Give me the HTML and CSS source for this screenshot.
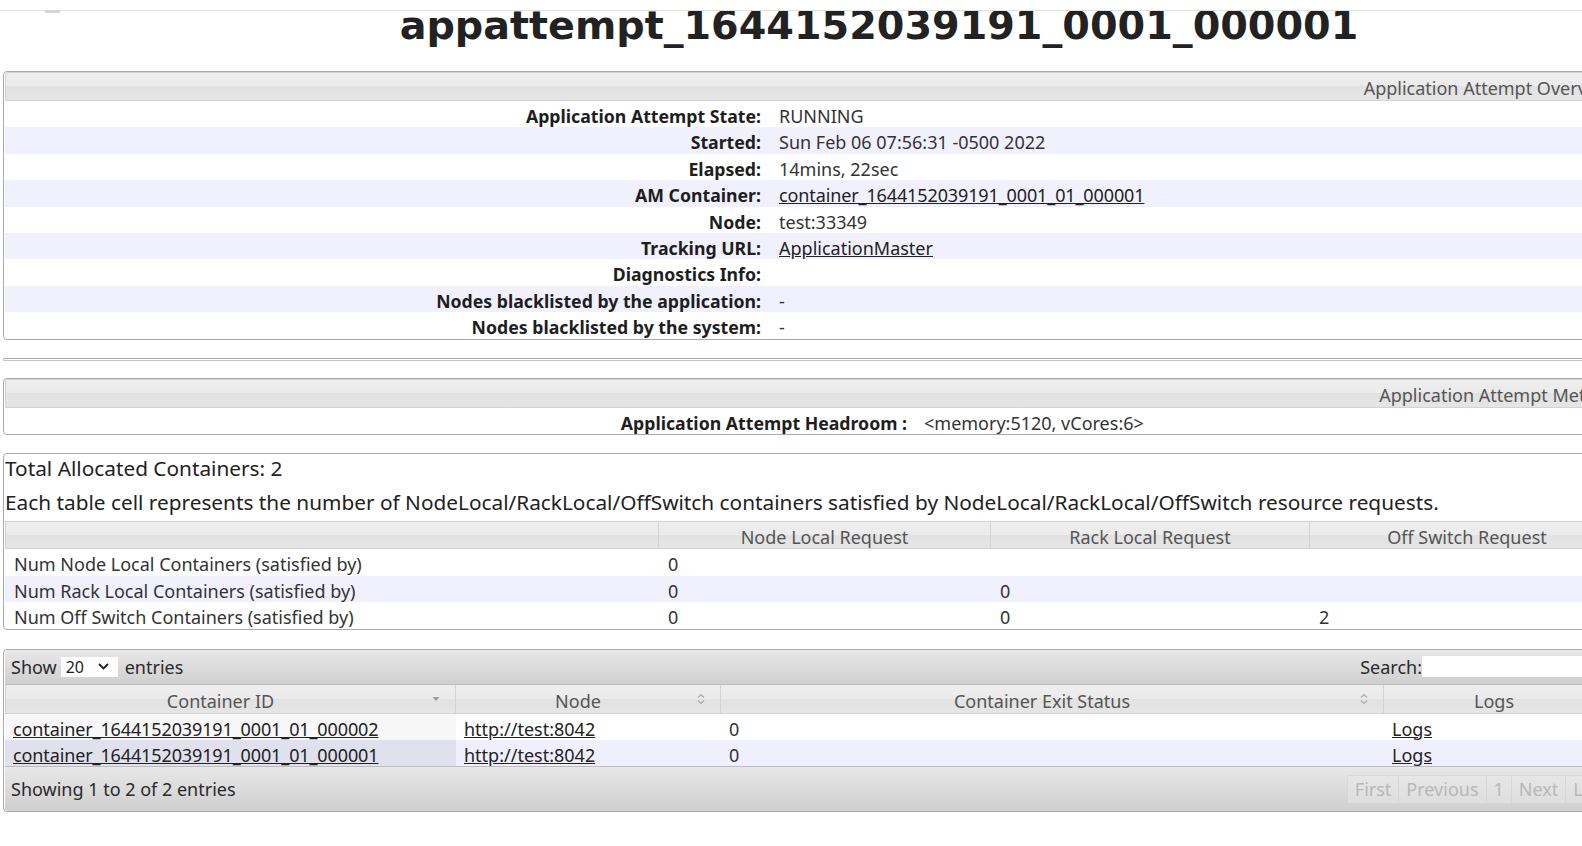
FILE: index.html
```html
<!DOCTYPE html>
<html lang="en">
<head>
<meta charset="utf-8">
<title>appattempt_1644152039191_0001_000001</title>
<link rel="stylesheet" href="styles.css">
</head>
<body>
<div class="topbar"><span class="topmark"></span></div>
<div class="content">
  <h1 class="title">appattempt_1644152039191_0001_000001</h1>

  <section class="box box-overview">
    <div class="box-head">Application Attempt Overview</div>
    <div class="info info-overview">
      <div class="info-row"><div class="lbl">Application Attempt State:</div><div class="val">RUNNING</div></div>
      <div class="info-row"><div class="lbl">Started:</div><div class="val">Sun Feb 06 07:56:31 -0500 2022</div></div>
      <div class="info-row"><div class="lbl">Elapsed:</div><div class="val">14mins, 22sec</div></div>
      <div class="info-row"><div class="lbl">AM Container:</div><div class="val"><a class="cid" href="#">container_1644152039191_0001_01_000001</a></div></div>
      <div class="info-row"><div class="lbl">Node:</div><div class="val">test:33349</div></div>
      <div class="info-row"><div class="lbl">Tracking URL:</div><div class="val"><a href="#">ApplicationMaster</a></div></div>
      <div class="info-row"><div class="lbl">Diagnostics Info:</div><div class="val"></div></div>
      <div class="info-row"><div class="lbl">Nodes blacklisted by the application:</div><div class="val">-</div></div>
      <div class="info-row"><div class="lbl">Nodes blacklisted by the system:</div><div class="val">-</div></div>
    </div>
  </section>

  <div class="box-empty"></div>

  <section class="box box-metrics">
    <div class="box-head">Application Attempt Metrics</div>
    <div class="info info-metrics">
      <div class="info-row"><div class="lbl">Application Attempt Headroom :</div><div class="val">&lt;memory:5120, vCores:6&gt;</div></div>
    </div>
  </section>

  <section class="box box-alloc">
    <p class="alloc-total">Total Allocated Containers: 2</p>
    <p class="alloc-desc">Each table cell represents the number of NodeLocal/RackLocal/OffSwitch containers satisfied by NodeLocal/RackLocal/OffSwitch resource requests.</p>
    <table class="grid alloc-table">
      <colgroup><col class="ac1"><col class="ac2"><col class="ac3"><col class="ac4"></colgroup>
      <thead>
        <tr><th class="first"></th><th>Node Local Request</th><th>Rack Local Request</th><th>Off Switch Request</th></tr>
      </thead>
      <tbody>
        <tr><td>Num Node Local Containers (satisfied by)</td><td>0</td><td></td><td></td></tr>
        <tr class="band"><td>Num Rack Local Containers (satisfied by)</td><td>0</td><td>0</td><td></td></tr>
        <tr><td>Num Off Switch Containers (satisfied by)</td><td>0</td><td>0</td><td>2</td></tr>
      </tbody>
    </table>
  </section>

  <section class="box box-containers">
    <div class="dt-bar dt-toolbar">
      <div class="dt-length">Show <span class="select"><span>20</span><svg class="chev" width="11" height="7" viewBox="0 0 11 7"><path d="M1 1 L5.5 5.5 L10 1" fill="none" stroke="#222" stroke-width="1.8"/></svg></span> entries</div>
      <div class="dt-search">Search:<input class="search-input" type="text"></div>
    </div>
    <table class="grid dt-table">
      <colgroup><col class="dc1"><col class="dc2"><col class="dc3"><col class="dc4"></colgroup>
      <thead>
        <tr>
          <th class="first"><div class="th-in"><span class="th-label">Container ID</span><svg class="sort" width="10" height="12" viewBox="0 0 10 12"><path d="M1.5 4 L8.5 4 L5 8 Z" fill="#9a9a9a"/></svg></div></th>
          <th><div class="th-in"><span class="th-label">Node</span><svg class="sort" width="10" height="12" viewBox="0 0 10 12"><path d="M2 4.5 L5 1.5 L8 4.5 M2 7.5 L5 10.5 L8 7.5" fill="none" stroke="#ababab" stroke-width="1.1"/></svg></div></th>
          <th><div class="th-in"><span class="th-label">Container Exit Status</span><svg class="sort" width="10" height="12" viewBox="0 0 10 12"><path d="M2 4.5 L5 1.5 L8 4.5 M2 7.5 L5 10.5 L8 7.5" fill="none" stroke="#ababab" stroke-width="1.1"/></svg></div></th>
          <th><div class="th-in"><span class="th-label">Logs</span><span class="sort-gap"></span></div></th>
        </tr>
      </thead>
      <tbody>
        <tr class="even"><td class="sorted"><a class="cid" href="#">container_1644152039191_0001_01_000002</a></td><td><a href="#">http://test:8042</a></td><td>0</td><td><a href="#">Logs</a></td></tr>
        <tr class="odd"><td class="sorted"><a class="cid" href="#">container_1644152039191_0001_01_000001</a></td><td><a href="#">http://test:8042</a></td><td>0</td><td><a href="#">Logs</a></td></tr>
      </tbody>
    </table>
    <div class="dt-bar dt-footer">
      <div class="dt-info">Showing 1 to 2 of 2 entries</div>
      <div class="paging">
        <span class="pg">First</span><span class="pg">Previous</span><span class="pg">1</span><span class="pg">Next</span><span class="pg">Last</span>
      </div>
    </div>
  </section>
</div>
</body>
</html>
```

FILE: styles.css
```css
html, body {
  margin: 0;
  padding: 0;
  overflow: hidden;
  background: #fff;
}

body {
  font-family: "Noto Sans", "Open Sans", sans-serif;
  font-size: 18px;
  color: #2a2a2a;
}

a {
  color: #222;
  text-decoration: underline;
}

.cid { letter-spacing: -0.12px; }

/* page header strip that covers the top of the title */
.topbar {
  position: relative;
  z-index: 2;
  height: 10px;
  background: #fff;
  border-bottom: 1px solid #e2e2e2;
  display: flex;
  align-items: flex-end;
}

.topmark {
  display: block;
  width: 15px;
  height: 3px;
  margin-left: 45px;
  margin-bottom: -3px;
  background: #d6d6d6;
}

.content {
  padding-left: 3px;
  overflow: hidden;
}

.title {
  margin: -1.5px 0 30.5px 0;
  width: 1752px;
  text-align: center;
  white-space: nowrap;
  font-family: "DejaVu Sans", sans-serif;
  font-weight: bold;
  font-size: 39.7px;
  line-height: 31px;
  color: #222;
}

.box {
  box-sizing: border-box;
  border: 1px solid #aaa;
  border-radius: 4px;
  padding: 0 1px;
  background: #fff;
}

.box-overview { width: 2973px; }
.box-metrics { width: 2988px; margin-top: 17.5px; }
.box-alloc { width: 1624px; margin-top: 17.5px; }
.box-containers { width: 1624px; margin-top: 19px; }

.box-head {
  height: 23px;
  padding-top: 4px;
  line-height: 23px;
  border: 1px solid #d3d3d3;
  border-radius: 3px 3px 0 0;
  text-align: center;
  color: #555;
  background: linear-gradient(#eeeeee 0%, #ebebeb 50%, #e2e2e2 50%, #e5e5e5 100%);
  white-space: nowrap;
}

.info-row {
  display: grid;
  box-sizing: border-box;
  height: 26.4px;
  padding-top: 4px;
  line-height: 22.4px;
  white-space: nowrap;
}

.info-overview .info-row { grid-template-columns: 765px 1fr; }
.info-metrics .info-row { grid-template-columns: 911px 1fr; }

.info-row:nth-child(even) { background: #f1f1fd; }

.lbl {
  text-align: right;
  font-weight: bold;
  font-size: 17.7px;
  color: #1e1e1e;
  padding-right: 9px;
}

.val {
  padding-left: 9px;
  color: #333;
}

.info-metrics .val { padding-left: 8px; }

.box-empty {
  width: 2973px;
  box-sizing: border-box;
  height: 3px;
  margin-top: 18px;
  border: 1px solid #aaa;
  border-bottom-color: #c4c4c4;
  border-radius: 4px;
}

.alloc-total {
  margin: 0;
  font-size: 20.8px;
  line-height: 28px;
  color: #222;
  white-space: nowrap;
}

.alloc-desc {
  margin: 6px 0 0 0;
  font-size: 20.8px;
  line-height: 28px;
  color: #222;
  white-space: nowrap;
}

.grid {
  table-layout: fixed;
  width: 1620px;
  border-collapse: separate;
  border-spacing: 0;
}

.alloc-table { margin-top: 5px; }

.ac1 { width: 654px; }
.ac2 { width: 332px; }
.ac3 { width: 319px; }
.ac4 { width: 315px; }

.dc1 { width: 451px; }
.dc2 { width: 265px; }
.dc3 { width: 663px; }
.dc4 { width: 241px; }

.grid th {
  font-weight: normal;
  color: #555;
  padding: 0;
  border-top: 1px solid #d3d3d3;
  border-bottom: 1px solid #d3d3d3;
  border-right: 1px solid #d3d3d3;
  background: linear-gradient(#eeeeee 0%, #ebebeb 50%, #e2e2e2 50%, #e5e5e5 100%);
  white-space: nowrap;
}

.grid th.first { border-left: 1px solid #d3d3d3; }

.alloc-table th {
  height: 22.5px;
  padding-top: 4px;
  line-height: 22.5px;
  text-align: center;
}

.grid td {
  height: 22.4px;
  padding: 4px 9px 0 9px;
  line-height: 22.4px;
  white-space: nowrap;
  overflow: hidden;
  color: #333;
}

.alloc-table tr.band td { background: #f1f1fd; }

.dt-table th {
  height: 24px;
  padding-top: 4px;
  border-top: none;
}

.th-in {
  display: flex;
  align-items: center;
  height: 24px;
  line-height: 24px;
  padding: 0 14px 0 8px;
}

.th-label {
  flex: 1;
  text-align: center;
  margin-right: 4px;
}

.sort {
  display: block;
  flex: none;
  margin-top: -4px;
}

.sort-gap {
  width: 10px;
  flex: none;
}

.dt-table td { padding-left: 8px; padding-right: 8px; }

.dt-table tr.even td { background: #fff; }
.dt-table tr.even td.sorted { background: #f7f7f7; }
.dt-table tr.odd td { background: #efeffd; }
.dt-table tr.odd td.sorted { background: #e1e1ee; }

.dt-bar {
  display: flex;
  align-items: center;
  justify-content: space-between;
  box-sizing: border-box;
  padding: 0 9px 0 6px;
  color: #2a2a2a;
  white-space: nowrap;
  background: linear-gradient(#e8e8e8, #cfcfcf);
}

.dt-toolbar {
  height: 35px;
  border-bottom: 1px solid #bdbdbd;
  border-radius: 3px 3px 0 0;
  padding-right: 3px;
}

.dt-footer {
  height: 44.5px;
  border-top: 1px solid #bdbdbd;
  border-radius: 0 0 3px 3px;
}

.dt-length {
  display: flex;
  align-items: center;
}

.select {
  display: flex;
  align-items: center;
  justify-content: space-between;
  box-sizing: border-box;
  width: 57px;
  height: 20px;
  margin: 0 7px 0 4px;
  padding: 0 9px 0 5px;
  background: #fff;
  font-size: 16px;
  color: #222;
}

.chev { display: block; }

.dt-search {
  display: flex;
  align-items: center;
}

.search-input {
  box-sizing: border-box;
  width: 200px;
  height: 21px;
  margin: 0;
  padding: 0;
  border: none;
  background: #fff;
}

.paging {
  display: flex;
  height: 29px;
}

.pg {
  box-sizing: border-box;
  height: 29px;
  line-height: 27px;
  padding: 0 7px;
  color: #b8b8b8;
  background: rgba(236, 236, 236, 0.45);
  border: 1px solid rgba(205, 205, 205, 0.55);
  border-left: none;
}

.pg:first-child { border-left: 1px solid rgba(205, 205, 205, 0.55); }
```
